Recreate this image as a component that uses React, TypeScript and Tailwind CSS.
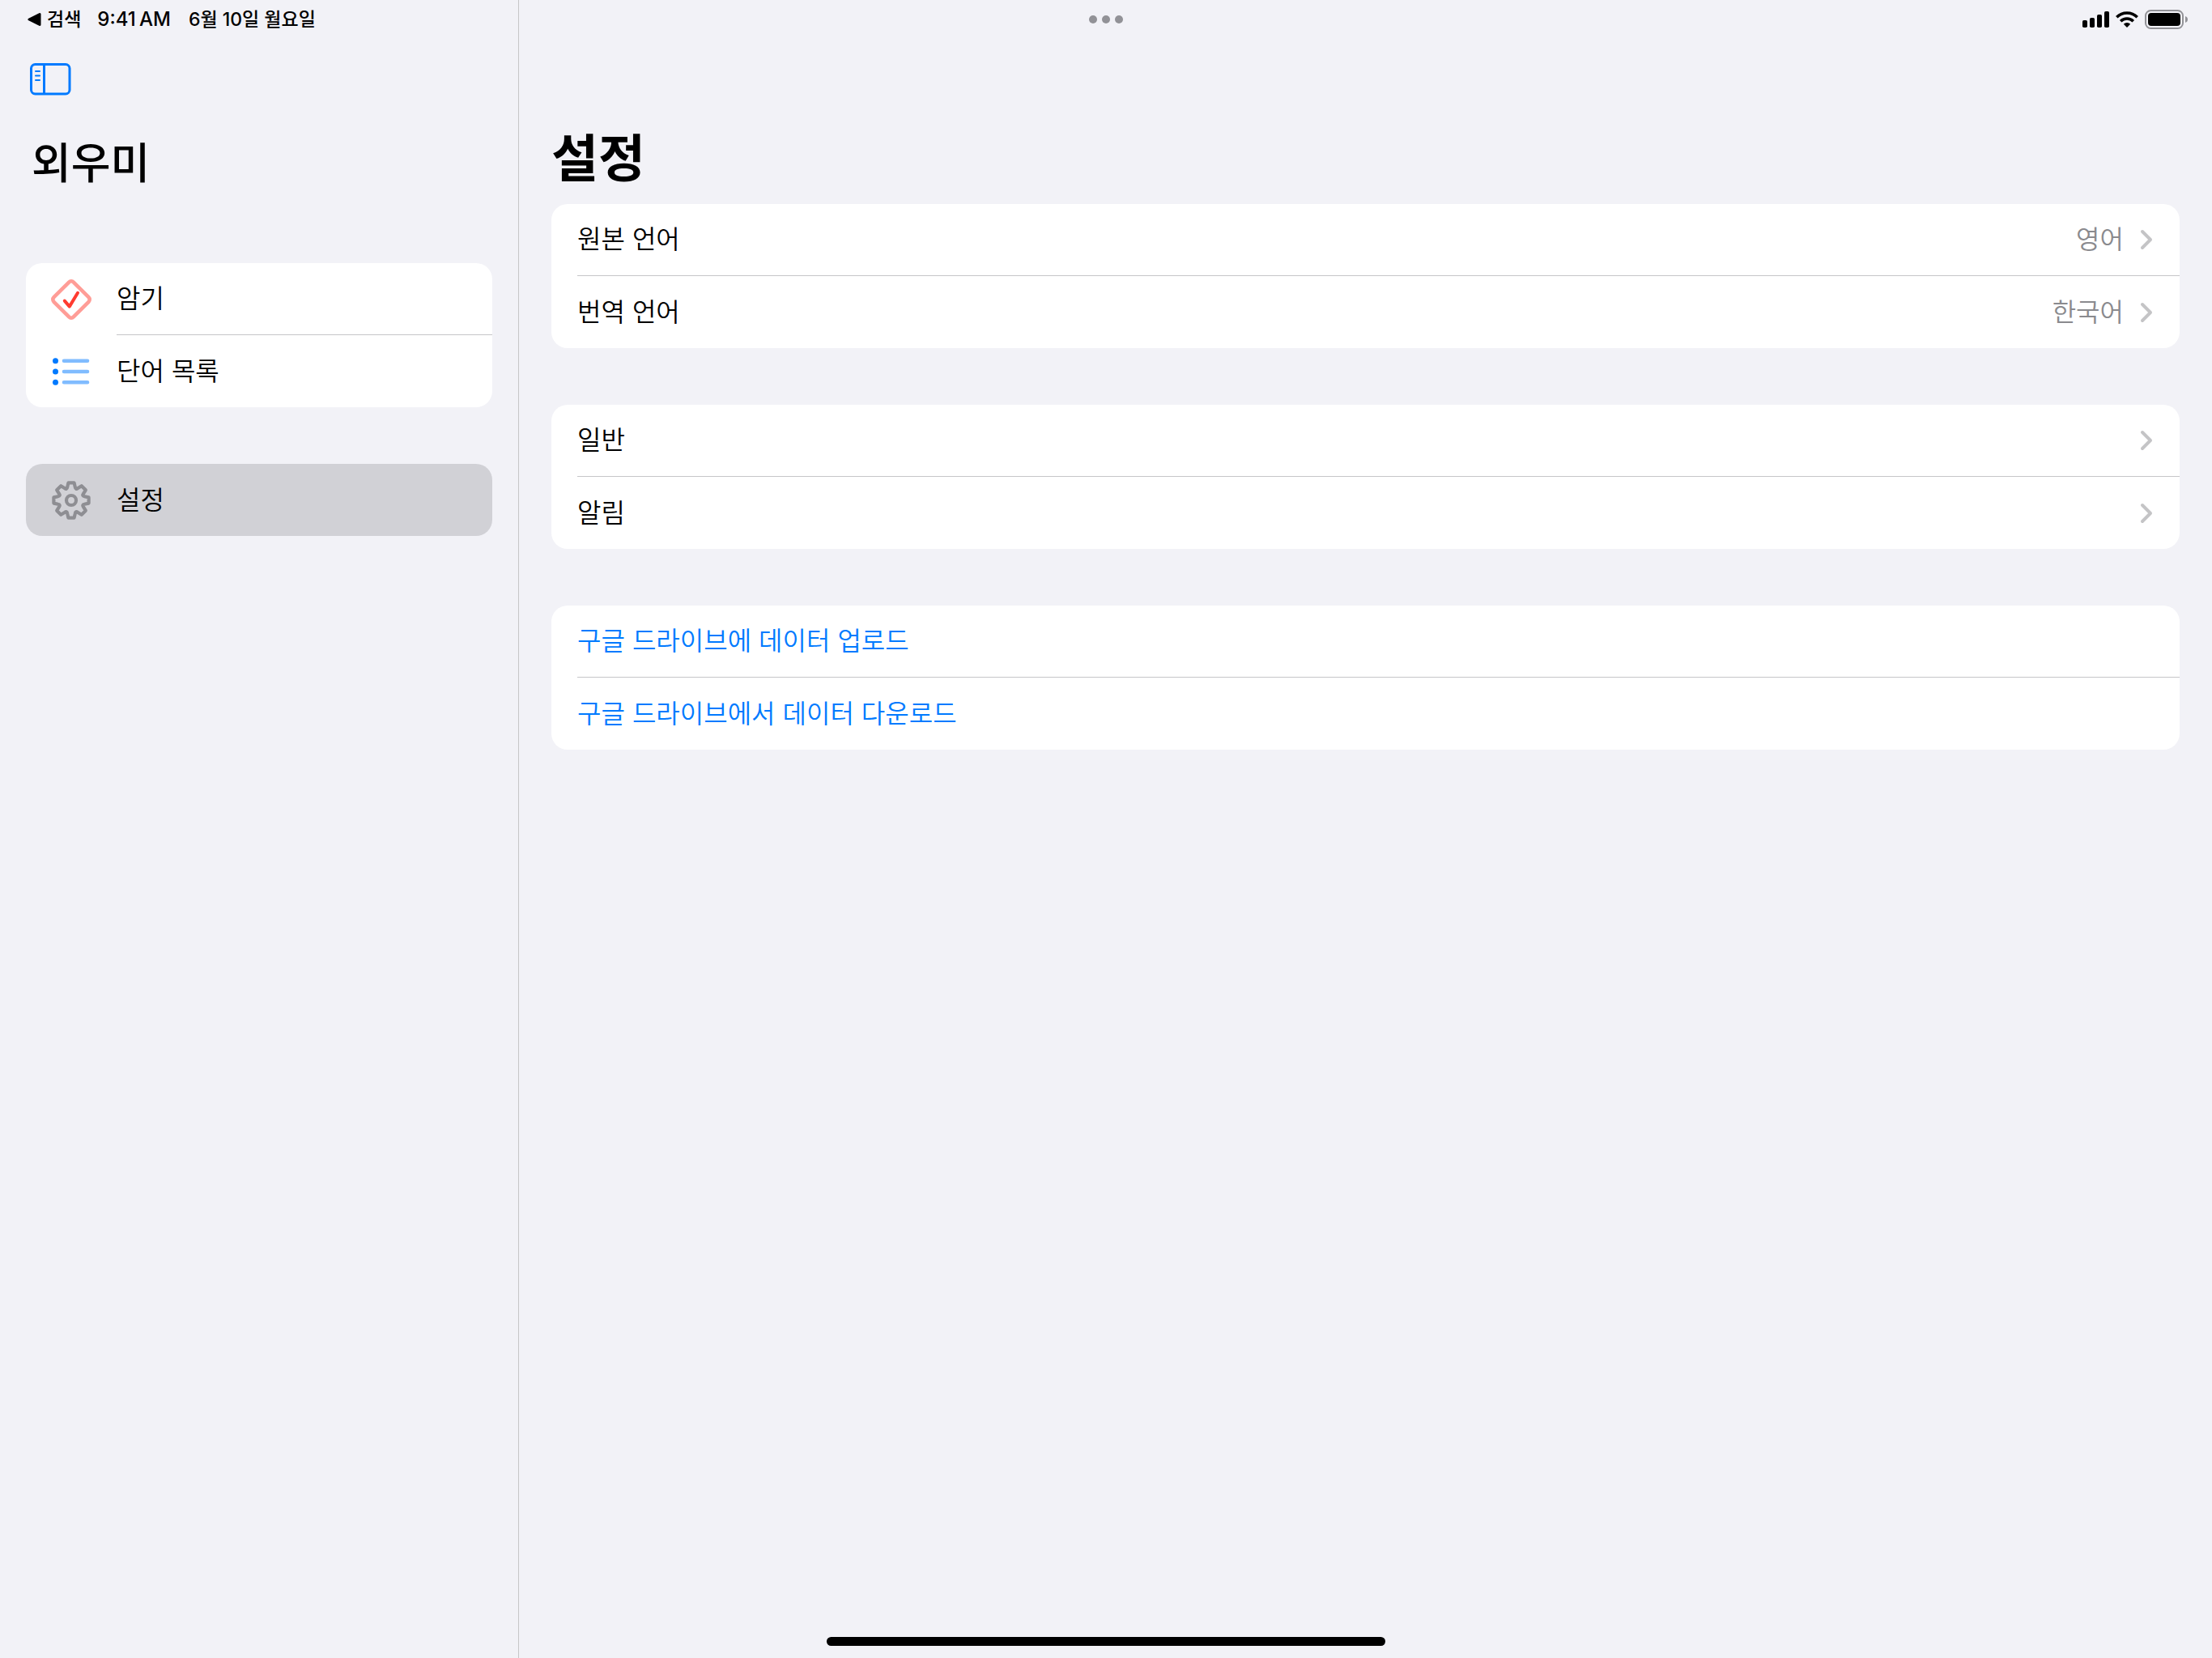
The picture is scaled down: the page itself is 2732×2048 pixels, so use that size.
import type { ReactNode } from "react";

const gearPath = (() => {
  const teeth = 8;
  const parts: string[] = [];
  const place = (x: number, y: number, angle: number) => {
    const c = Math.cos(angle);
    const s = Math.sin(angle);
    return `${(25 + x * c - y * s).toFixed(2)} ${(25 + x * s + y * c).toFixed(2)}`;
  };
  for (let i = 0; i < teeth; i += 1) {
    const a = (i * Math.PI * 2) / teeth;
    const next = ((i + 1) * Math.PI * 2) / teeth;
    const mid = (a + next) / 2;
    parts.push(`${i === 0 ? "M" : "L"}${place(-3.6, -21.6, a)}`);
    parts.push(`L${place(3.6, -21.6, a)}`);
    parts.push(`L${place(4.8, -16.4, a)}`);
    parts.push(`Q${place(0, -14, mid)} ${place(-4.8, -16.4, next)}`);
  }
  return `${parts.join("")}Z`;
})();

function SidebarIcon() {
  return (
    <svg width="52" height="40" viewBox="0 0 52 40" fill="none" stroke="#007aff" aria-hidden="true">
      <rect x="2.5" y="1.5" width="47.5" height="36.5" rx="5" strokeWidth="3" />
      <path d="M18.5 2v36" strokeWidth="3" />
      <path d="M8 10h5M8 15.5h5M8 21h5" strokeWidth="2" strokeLinecap="round" />
    </svg>
  );
}

function DiamondCheckIcon() {
  return (
    <svg width="52" height="52" viewBox="0 0 52 52" fill="none" strokeLinecap="round" strokeLinejoin="round" aria-hidden="true">
      <rect x="8.8" y="8.8" width="34.4" height="34.4" rx="4" transform="rotate(45 26 26)" stroke="#ff9d97" strokeWidth="4.6" />
      <path d="M17.8 27.6l6 7 10.2-16.8" stroke="#ff3b30" strokeWidth="4" />
    </svg>
  );
}

function ListIcon() {
  return (
    <svg width="52" height="52" viewBox="0 0 52 52" fill="none" aria-hidden="true">
      <g fill="#007aff">
        <circle cx="6.5" cy="12.7" r="3.5" />
        <circle cx="6.5" cy="26" r="3.5" />
        <circle cx="6.5" cy="39.3" r="3.5" />
      </g>
      <path d="M17 12.7h29M17 26h29M17 39.3h29" stroke="#80bcff" strokeWidth="4.6" strokeLinecap="round" />
    </svg>
  );
}

function GearIcon() {
  return (
    <svg width="50" height="50" viewBox="0 0 50 50" fill="none" stroke="#8e8e93" strokeWidth="4.2" strokeLinejoin="round" aria-hidden="true">
      <path d={gearPath} />
      <circle cx="25" cy="25" r="6" />
    </svg>
  );
}

function Chevron() {
  return (
    <svg width="16" height="26" viewBox="0 0 16 26" fill="none" stroke="#c4c4c6" strokeWidth="4" strokeLinecap="round" strokeLinejoin="round" aria-hidden="true">
      <path d="M3 3l10 10L3 23" />
    </svg>
  );
}

function StatusIcons() {
  return (
    <div className="flex items-center gap-2">
      <svg width="33" height="20" viewBox="0 0 33 20" aria-hidden="true">
        <rect x="0" y="11" width="6" height="9" rx="1.8" />
        <rect x="9" y="8" width="6" height="12" rx="1.8" />
        <rect x="18" y="4" width="6" height="16" rx="1.8" />
        <rect x="27" y="0" width="6" height="20" rx="1.8" />
      </svg>
      <svg width="28" height="20" viewBox="0 0 28 20" fill="none" stroke="#000" strokeWidth="3.6" aria-hidden="true">
        <path d="M1.3 7.2a18 18 0 0 1 25.4 0" />
        <path d="M6.2 12.2a11 11 0 0 1 15.6 0" />
        <path d="M14 20l-4.2-4.2a6 6 0 0 1 8.4 0z" fill="#000" stroke="none" />
      </svg>
      <svg width="53" height="24" viewBox="0 0 53 24" aria-hidden="true">
        <rect x="1" y="1" width="46" height="22" rx="6.5" fill="none" stroke="#929297" strokeWidth="2" />
        <rect x="4" y="4" width="40" height="16" rx="4" />
        <path d="M50 8c4 1.2 4 6.8 0 8z" fill="#929297" />
      </svg>
    </div>
  );
}

function StatusBar() {
  return (
    <header className="absolute inset-x-0 top-0 grid h-12 grid-cols-3 items-center px-[30px] font-medium text-black">
      <div className="flex items-center pl-1 text-[23px] leading-none">
        <a href="#search" className="flex items-center gap-[7px]">
          <svg width="17" height="18" viewBox="0 0 17 18" aria-hidden="true">
            <path d="M2 9L15 2.5v13z" stroke="#000" strokeWidth="3" strokeLinejoin="round" />
          </svg>
          검색
        </a>
        <time className="ml-5 text-2xl leading-none">9:41&#8201;AM</time>
        <span className="ml-[22px]">6월 10일 월요일</span>
      </div>
      <div className="flex justify-center">
        <button type="button" aria-label="멀티태스킹" className="flex gap-1.5">
          <span className="size-2.5 rounded-full bg-[#929297]" />
          <span className="size-2.5 rounded-full bg-[#929297]" />
          <span className="size-2.5 rounded-full bg-[#929297]" />
        </button>
      </div>
      <div className="flex justify-end">
        <StatusIcons />
      </div>
    </header>
  );
}

function NavItem({ icon, label, divided }: { icon: ReactNode; label: string; divided?: boolean }) {
  return (
    <li className="flex h-[89px]">
      <button type="button" className="flex flex-1 items-center text-left">
        <span className="flex w-28 shrink-0 justify-center">{icon}</span>
        <span className={divided ? "flex h-full flex-1 items-center border-b border-[#c6c6c8]" : "flex h-full flex-1 items-center"}>
          {label}
        </span>
      </button>
    </li>
  );
}

type RowProps = { label: string; value?: string; chevron?: boolean; action?: boolean; divided?: boolean };

function Row({ label, value, chevron, action, divided }: RowProps) {
  return (
    <li className="flex h-[89px] pl-8">
      <button
        type="button"
        className={
          divided
            ? "flex flex-1 items-center border-b border-[#c6c6c8] pr-[33px] text-left"
            : "flex flex-1 items-center pr-[33px] text-left"
        }
      >
        <span className={action ? "flex-1 text-[#007aff]" : "flex-1"}>{label}</span>
        {value && <span className="mr-5 text-[#8a8a8e]">{value}</span>}
        {chevron && <Chevron />}
      </button>
    </li>
  );
}

function Group({ rows }: { rows: RowProps[] }) {
  return (
    <ul className="overflow-hidden rounded-[20px] bg-white">
      {rows.map((row, i) => (
        <Row key={row.label} {...row} divided={i < rows.length - 1} />
      ))}
    </ul>
  );
}

export default function App() {
  return (
    <div className="relative flex min-h-screen bg-[#f2f2f7] font-['Inter','Noto_Sans_CJK_KR',sans-serif] text-[32px] leading-10 font-[350] text-black">
      <StatusBar />

      <aside className="w-[641px] shrink-0 border-r border-[#c6c6c8] px-8 pt-[78px]">
        <button type="button" aria-label="사이드바 가리기" className="ml-1 block">
          <SidebarIcon />
        </button>
        <h1 className="mt-[52px] ml-[7px] text-[53px] leading-16 font-medium">외우미</h1>
        <nav className="mt-[91px] flex flex-col gap-[70px]">
          <ul className="overflow-hidden rounded-[20px] bg-white">
            <NavItem icon={<DiamondCheckIcon />} label="암기" divided />
            <NavItem icon={<ListIcon />} label="단어 목록" />
          </ul>
          <ul className="rounded-[20px] bg-[#d1d1d6]">
            <NavItem icon={<GearIcon />} label="설정" />
          </ul>
        </nav>
      </aside>

      <main className="flex-1 px-10 pt-[157px]">
        <h2 className="text-[63px] leading-[76px] font-bold">설정</h2>
        <div className="mt-[19px] flex flex-col gap-[70px]">
          <Group
            rows={[
              { label: "원본 언어", value: "영어", chevron: true },
              { label: "번역 언어", value: "한국어", chevron: true },
            ]}
          />
          <Group
            rows={[
              { label: "일반", chevron: true },
              { label: "알림", chevron: true },
            ]}
          />
          <Group
            rows={[
              { label: "구글 드라이브에 데이터 업로드", action: true },
              { label: "구글 드라이브에서 데이터 다운로드", action: true },
            ]}
          />
        </div>
      </main>

      <div className="absolute inset-x-0 bottom-[15px] flex justify-center">
        <div className="h-[11px] w-[690px] rounded-full bg-black" />
      </div>
    </div>
  );
}
